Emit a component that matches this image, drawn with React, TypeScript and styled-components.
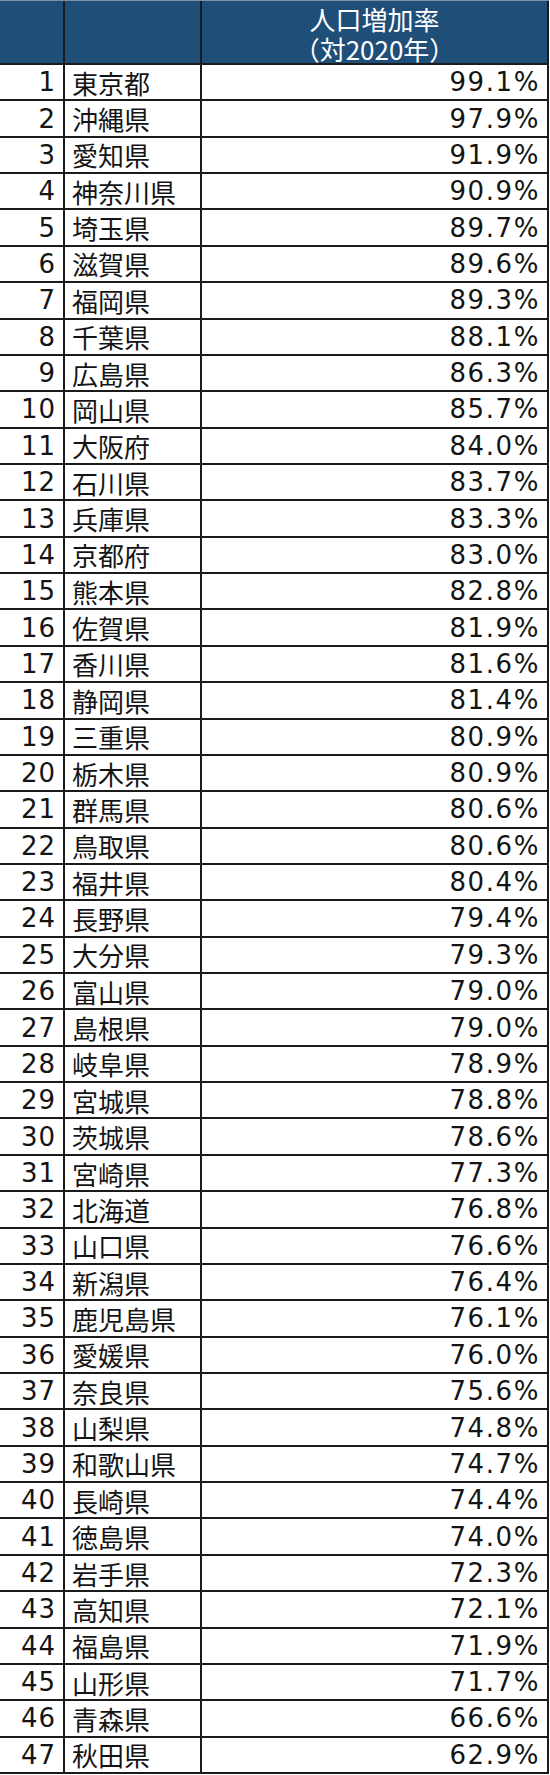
import React from "react";
import styled, { createGlobalStyle } from "styled-components";

const GlobalStyle = createGlobalStyle`
  html, body {
    margin: 0;
    padding: 0;
    background: #fff;
  }
  body {
    font-family: "DejaVu Sans", "Noto Sans CJK JP", sans-serif;
  }
`;

const RAW = `東京都 99.1,沖縄県 97.9,愛知県 91.9,神奈川県 90.9,埼玉県 89.7,滋賀県 89.6,福岡県 89.3,千葉県 88.1,広島県 86.3,岡山県 85.7,大阪府 84.0,石川県 83.7,兵庫県 83.3,京都府 83.0,熊本県 82.8,佐賀県 81.9,香川県 81.6,静岡県 81.4,三重県 80.9,栃木県 80.9,群馬県 80.6,鳥取県 80.6,福井県 80.4,長野県 79.4,大分県 79.3,富山県 79.0,島根県 79.0,岐阜県 78.9,宮城県 78.8,茨城県 78.6,宮崎県 77.3,北海道 76.8,山口県 76.6,新潟県 76.4,鹿児島県 76.1,愛媛県 76.0,奈良県 75.6,山梨県 74.8,和歌山県 74.7,長崎県 74.4,徳島県 74.0,岩手県 72.3,高知県 72.1,福島県 71.9,山形県 71.7,青森県 66.6,秋田県 62.9`;

type Row = { rank: number; name: string; rate: string };

const rows: Row[] = RAW.split(",").map((item, index) => {
  const [name, rate] = item.split(" ");
  return { rank: index + 1, name, rate };
});

const TableSC = styled.div`
  display: grid;
  grid-template-columns: 65px 137px 347px;
  grid-template-rows: 64px repeat(47, 1fr);
  width: 549px;
  height: 1774px;
  border-top: 1px solid #7d93aa;
  box-sizing: border-box;
`;

const HeadCellSC = styled.div`
  background: #1f4e79;
  border-right: 2px solid #1b1b1b;
  border-bottom: 2px solid #1b1b1b;
  color: #fff;
  font-family: "Noto Sans CJK JP", sans-serif;
  font-size: 26px;
  display: flex;
  flex-direction: column;
  align-items: center;
  justify-content: flex-start;
  gap: 4px;
  padding-top: 5px;
`;

const HeadLineSC = styled.span`
  display: block;
  line-height: 1;
  height: 26px;
`;

const CellSC = styled.div<{ align: "left" | "right" }>`
  border-right: 2px solid #1b1b1b;
  border-bottom: 2px solid #1b1b1b;
  display: flex;
  align-items: center;
  justify-content: ${({ align }) => (align === "right" ? "flex-end" : "flex-start")};
  color: #141414;
  font-size: 26px;
  white-space: nowrap;
  overflow: hidden;
`;

const RankSC = styled(CellSC)`
  padding-right: 7px;
  letter-spacing: 1px;
`;

const NameSC = styled(CellSC)`
  padding-left: 7px;
  font-family: "Noto Sans CJK JP", sans-serif;
`;

const RateSC = styled(CellSC)`
  padding-right: 7px;
  letter-spacing: 1.6px;
`;

const App: React.FC = () => {
  return (
    <>
      <GlobalStyle />
      <TableSC>
        <HeadCellSC />
        <HeadCellSC />
        <HeadCellSC>
          <HeadLineSC>人口増加率</HeadLineSC>
          <HeadLineSC>（対2020年）</HeadLineSC>
        </HeadCellSC>
        {rows.map((row) => (
          <React.Fragment key={row.rank}>
            <RankSC align="right">{row.rank}</RankSC>
            <NameSC align="left">{row.name}</NameSC>
            <RateSC align="right">{row.rate}%</RateSC>
          </React.Fragment>
        ))}
      </TableSC>
    </>
  );
};

export default App;
